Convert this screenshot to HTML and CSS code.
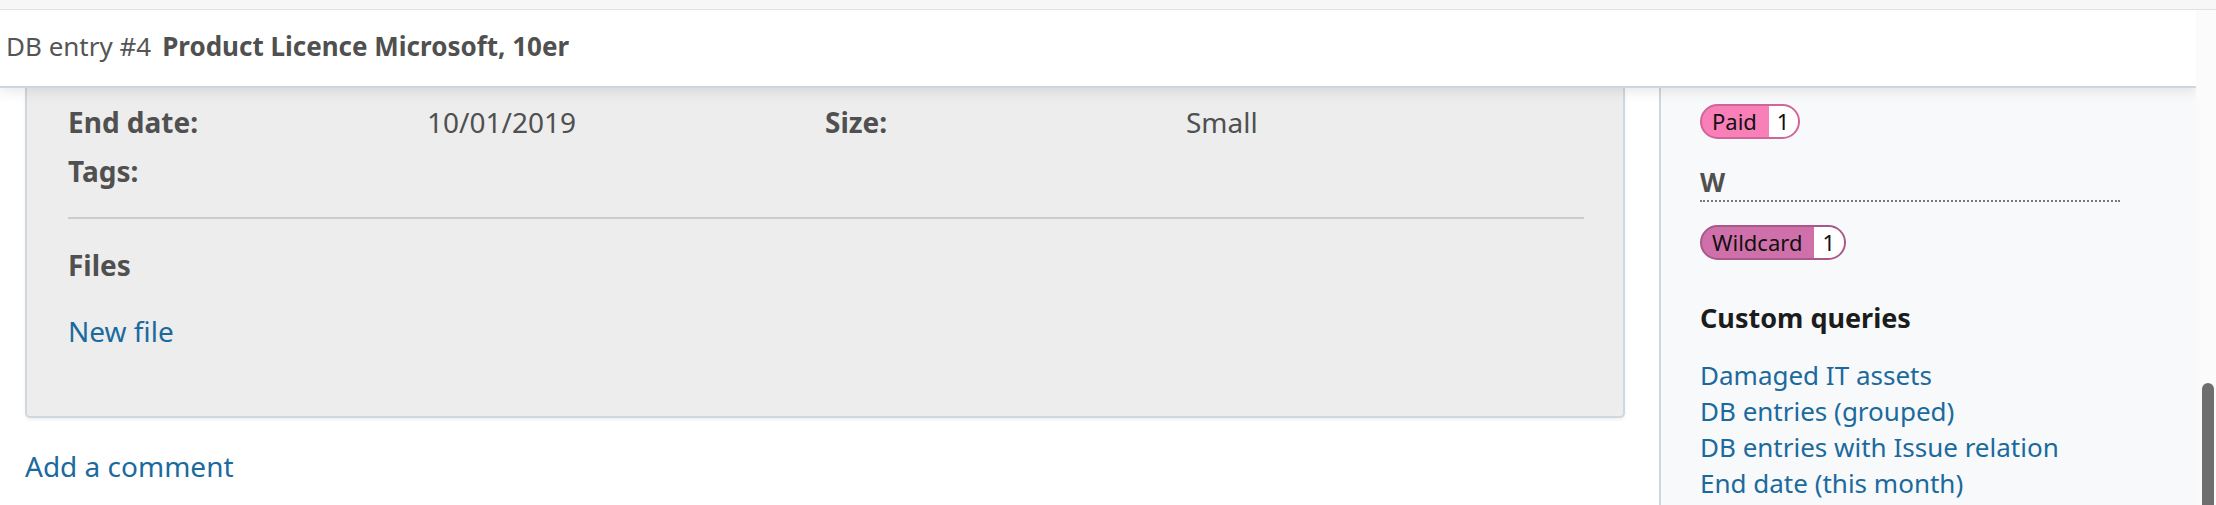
FILE: index.html
```html
<!DOCTYPE html>
<html lang="en">
<head>
<meta charset="utf-8">
<title>DB entry #4</title>
<link rel="stylesheet" href="styles.css">
</head>
<body>
<div class="topstrip"></div>
<div class="viewport">
  <div class="page">
    <header class="titlebar">
      <span class="entry-id">DB entry #4</span>
      <span class="entry-title">Product Licence Microsoft, 10er</span>
    </header>
    <div class="layout">
      <main class="content">
        <section class="entry-box">
          <div class="attrs">
            <div class="label">End date:</div>
            <div class="value">10/01/2019</div>
            <div class="label">Size:</div>
            <div class="value">Small</div>
            <div class="label">Tags:</div>
            <div class="value"></div>
            <div class="label"></div>
            <div class="value"></div>
          </div>
          <hr class="sep">
          <h3 class="files-title">Files</h3>
          <a class="link new-file" href="#">New file</a>
        </section>
        <a class="link add-comment" href="#">Add a comment</a>
      </main>
      <aside class="sidebar">
        <span class="badge badge-paid"><span class="badge-name">Paid</span><span class="badge-count">1</span></span>
        <h4 class="letter">W</h4>
        <span class="badge badge-wild"><span class="badge-name">Wildcard</span><span class="badge-count">1</span></span>
        <h3 class="side-title">Custom queries</h3>
        <ul class="queries">
          <li><a class="link" href="#">Damaged IT assets</a></li>
          <li><a class="link" href="#">DB entries (grouped)</a></li>
          <li><a class="link" href="#">DB entries with Issue relation</a></li>
          <li><a class="link" href="#">End date (this month)</a></li>
        </ul>
      </aside>
    </div>
  </div>
  <div class="scrolltrack"><div class="thumb"></div></div>
</div>
</body>
</html>
```
FILE: styles.css
```css
* { box-sizing: border-box; }
html, body { margin: 0; padding: 0; }
body {
  width: 2216px;
  height: 505px;
  overflow: hidden;
  background: #ffffff;
  font-family: "Noto Sans", "Open Sans", sans-serif;
  color: #505050;
}
.topstrip {
  height: 10px;
  background: #f7f7f7;
  border-bottom: 1px solid #e2e2e2;
}
.viewport {
  display: flex;
  height: 495px;
  overflow: hidden;
}
.page {
  width: 2196px;
  display: flex;
  flex-direction: column;
  overflow: hidden;
}
.titlebar {
  position: relative;
  z-index: 2;
  flex: none;
  height: 78px;
  padding: 19px 0 0 6px;
  background: #ffffff;
  border-bottom: 2px solid #cfd6de;
  box-shadow: 0 4px 12px rgba(0, 0, 0, 0.09);
  font-size: 26px;
  line-height: 35px;
  white-space: nowrap;
  display: flex;
  gap: 11px;
}
.entry-id { color: #555555; }
.entry-title { font-weight: 700; color: #505050; }
.layout {
  flex: 1;
  display: flex;
  min-height: 0;
}
.content {
  width: 1659px;
  padding-left: 25px;
  padding-right: 34px;
}
.entry-box {
  background: #ededed;
  border: 2px solid #d0d7de;
  border-top: none;
  border-radius: 0 0 5px 5px;
  box-shadow: 0 2px 3px rgba(0, 0, 0, 0.06);
  padding: 10px 39px 60px 41px;
  font-size: 28px;
}
.attrs {
  display: grid;
  grid-template-columns: 359px 398px 361px 1fr;
  line-height: 49px;
}
.label { font-weight: 700; color: #505050; }
.value { color: #505050; }
.sep {
  border: none;
  height: 2px;
  background: #cccccc;
  margin: 21px 0 0 0;
}
.files-title {
  margin: 22px 0 0 0;
  font-size: 28px;
  line-height: 49px;
  font-weight: 700;
  color: #505050;
}
.link {
  color: #1b6a9e;
  text-decoration: none;
}
.new-file {
  display: block;
  margin-top: 17px;
  line-height: 49px;
}
.add-comment {
  display: block;
  margin-top: 24px;
  font-size: 28px;
  line-height: 49px;
}
.sidebar {
  width: 537px;
  background: #f8f9fa;
  border-left: 2px solid #cfd6de;
  padding: 16px 0 0 39px;
  display: flex;
  flex-direction: column;
  align-items: flex-start;
}
.badge {
  display: inline-flex;
  border-radius: 18px;
  overflow: hidden;
  font-size: 22px;
  line-height: 31px;
  color: #111111;
  border: 2px solid;
}
.badge-name { padding: 0 12px 0 10px; }
.badge-count { background: #ffffff; padding: 0 9px 0 8px; }
.badge-paid { background: #f97fb9; border-color: #cf6598; }
.badge-wild { background: #d070aa; border-color: #a8598a; }
.letter {
  margin: 28px 0 0 0;
  width: 420px;
  font-size: 26px;
  line-height: 31px;
  font-weight: 700;
  color: #505050;
  padding-bottom: 2px;
  border-bottom: 2px dotted #7a7a7a;
}
.badge-wild { margin-top: 23px; }
.side-title {
  margin: 42px 0 0 0;
  font-size: 27px;
  line-height: 31px;
  font-weight: 700;
  color: #1c1c1c;
}
.queries {
  list-style: none;
  margin: 24px 0 0 0;
  padding: 0;
  font-size: 26px;
  line-height: 36px;
}
.scrolltrack {
  width: 20px;
  background: #fbfbfb;
  padding: 373px 2px 0 6px;
}
.thumb {
  width: 12px;
  height: 200px;
  background: #6e6e6e;
  border-radius: 6px;
}
```
